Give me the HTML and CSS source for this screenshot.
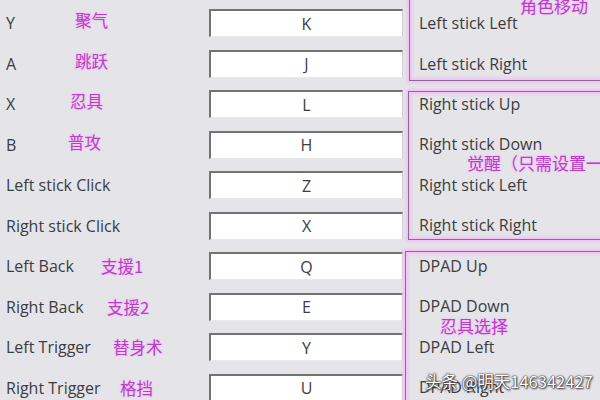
FILE: index.html
```html
<!DOCTYPE html>
<html>
<head>
<meta charset="utf-8">
<link rel="stylesheet" href="styles.css">
</head>
<body>
<div class="page">
  <div class="keys">
    <div class="row"><div class="label"><span class="en">Y</span><span class="cn n75 up">聚气</span></div><div class="box">K</div></div>
    <div class="row"><div class="label"><span class="en">A</span><span class="cn n75 up">跳跃</span></div><div class="box">J</div></div>
    <div class="row"><div class="label"><span class="en">X</span><span class="cn n70 up">忍具</span></div><div class="box">L</div></div>
    <div class="row"><div class="label"><span class="en">B</span><span class="cn n68 up">普攻</span></div><div class="box">H</div></div>
    <div class="row"><div class="label"><span class="en">Left stick Click</span></div><div class="box">Z</div></div>
    <div class="row"><div class="label"><span class="en">Right stick Click</span></div><div class="box">X</div></div>
    <div class="row"><div class="label"><span class="en">Left Back</span><span class="cn n101">支援1</span></div><div class="box">Q</div></div>
    <div class="row"><div class="label"><span class="en">Right Back</span><span class="cn n107">支援2</span></div><div class="box">E</div></div>
    <div class="row"><div class="label"><span class="en">Left Trigger</span><span class="cn n113">替身术</span></div><div class="box">Y</div></div>
    <div class="row"><div class="label"><span class="en">Right Trigger</span><span class="cn n120">格挡</span></div><div class="box">U</div></div>
  </div>
  <div class="groups">
    <div class="group g1">
      <div class="item">Left stick Left</div>
      <div class="item">Left stick Right</div>
    </div>
    <div class="group g2">
      <div class="item">Right stick Up</div>
      <div class="item">Right stick Down</div>
      <div class="item">Right stick Left</div>
      <div class="item">Right stick Right</div>
    </div>
    <div class="group g3">
      <div class="item">DPAD Up</div>
      <div class="item">DPAD Down</div>
      <div class="item">DPAD Left</div>
      <div class="item">DPAD Right</div>
    </div>
  </div>
  <div class="note note-move">角色移动</div>
  <div class="note note-wake">觉醒（只需设置一</div>
  <div class="note note-tool">忍具选择</div>
  <div class="watermark">头条 @明天146342427</div>
</div>
</body>
</html>
```
FILE: styles.css
```css
html, body {
  margin: 0;
  padding: 0;
  background: #e4e4e9;
  overflow: hidden;
}
.page {
  position: relative;
  width: 600px;
  height: 400px;
  overflow: hidden;
  display: flex;
  font-family: "Open Sans", "Noto Sans CJK SC", sans-serif;
  font-size: 16px;
  color: #3d3d3f;
}
.keys {
  width: 405px;
  flex: none;
  padding-top: 2.75px;
}
.row {
  height: 40.5px;
  display: flex;
  align-items: center;
}
.label {
  width: 209px;
  flex: none;
  display: grid;
  align-items: center;
  padding-left: 6px;
  box-sizing: border-box;
  white-space: nowrap;
}
.en, .cn {
  grid-area: 1 / 1;
  justify-self: start;
}
.cn {
  font-family: "Noto Sans CJK SC", sans-serif;
  font-size: 16.5px;
  color: #b83ec8;
  text-shadow: 0 0 2px #f2b4f2, 0 0 3px #f6cdf6;
  position: relative;
}
.up { top: -3px; }
.n75 { margin-left: 69px; }
.n70 { margin-left: 64px; }
.n68 { margin-left: 62px; }
.n101 { margin-left: 95px; }
.n107 { margin-left: 101px; }
.n113 { margin-left: 107px; }
.n120 { margin-left: 114px; }
.box {
  width: 194px;
  height: 28px;
  box-sizing: border-box;
  background: #fff;
  border-top: 2px solid #737373;
  border-left: 2px solid #737373;
  border-right: 1px solid #cfcfd2;
  border-bottom: 1px solid #e8e8ea;
  display: flex;
  align-items: center;
  justify-content: center;
}
.groups {
  flex: 1;
  display: flex;
  flex-direction: column;
}
.group {
  border: 1px solid #8a6a92;
  box-shadow: 0 0 3px 2px #f0c2f1, inset 0 0 3px 2px #f0c2f1;
  margin-right: -20px;
  display: flex;
  flex-direction: column;
  gap: 16.5px;
  white-space: nowrap;
}
.item {
  height: 24px;
  line-height: 24px;
}
.g1 {
  margin-left: 4px;
  margin-top: -10px;
  padding: 20px 0 4px 9px;
}
.g2 {
  margin-left: 3px;
  margin-top: 10px;
  padding: 0 0 2px 10px;
}
.g3 {
  margin-left: 0;
  margin-top: 10.5px;
  padding: 2px 0 20px 13px;
}
.note {
  position: absolute;
  font-family: "Noto Sans CJK SC", sans-serif;
  font-size: 17px;
  color: #b83ec8;
  text-shadow: 0 0 2px #f2b4f2, 0 0 3px #f6cdf6;
  white-space: nowrap;
  line-height: 20px;
}
.note-move { left: 520px; top: -4px; }
.note-wake { left: 467px; top: 153px; }
.note-tool { left: 440px; top: 316px; }
.watermark {
  position: absolute;
  left: 425px;
  top: 370px;
  font-family: "Noto Sans CJK SC", sans-serif;
  font-size: 16.5px;
  line-height: 22px;
  color: #fff;
  white-space: nowrap;
  text-shadow: 0 0 2px #333, 0 0 1px #000, 1px 1px 2px #444;
}
```
